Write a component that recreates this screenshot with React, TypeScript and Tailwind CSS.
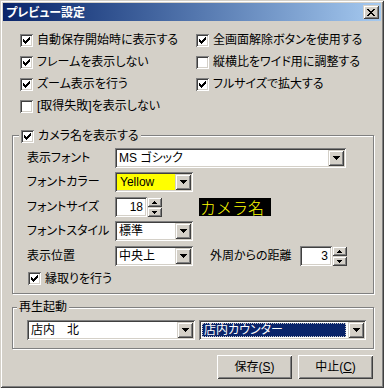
import React from "react";

const sunken =
  "shadow-[inset_1px_1px_0_#808080,inset_-1px_-1px_0_#ffffff,inset_2px_2px_0_#404040,inset_-2px_-2px_0_#d4d0c8]";
const raised =
  "shadow-[inset_1px_1px_0_#d4d0c8,inset_-1px_-1px_0_#404040,inset_2px_2px_0_#ffffff,inset_-2px_-2px_0_#808080]";
const button =
  "shadow-[inset_1px_1px_0_#ffffff,inset_-1px_-1px_0_#404040,inset_2px_2px_0_#d4d0c8,inset_-2px_-2px_0_#808080]";
const etched = "border border-[#808080] shadow-[inset_1px_1px_0_#ffffff,1px_1px_0_#ffffff]";

const CheckMark = () => (
  <svg width="13" height="13" viewBox="0 0 13 13" shapeRendering="crispEdges" className="block">
    <rect x="3" y="5" width="1" height="3" fill="#000" />
    <rect x="4" y="6" width="1" height="3" fill="#000" />
    <rect x="5" y="7" width="1" height="3" fill="#000" />
    <rect x="6" y="6" width="1" height="3" fill="#000" />
    <rect x="7" y="5" width="1" height="3" fill="#000" />
    <rect x="8" y="4" width="1" height="3" fill="#000" />
    <rect x="9" y="3" width="1" height="3" fill="#000" />
  </svg>
);

const Checkbox = ({ checked, label }: { checked?: boolean; label: string }) => (
  <div className="flex items-center gap-[4px]">
    <div className={`w-[13px] h-[13px] shrink-0 bg-white ${sunken}`}>{checked && <CheckMark />}</div>
    <span className="leading-[14px] whitespace-nowrap">{label}</span>
  </div>
);

const DownArrow = () => (
  <svg width="7" height="4" viewBox="0 0 7 4" shapeRendering="crispEdges" className="block">
    <rect x="0" y="0" width="7" height="1" fill="#000" />
    <rect x="1" y="1" width="5" height="1" fill="#000" />
    <rect x="2" y="2" width="3" height="1" fill="#000" />
    <rect x="3" y="3" width="1" height="1" fill="#000" />
  </svg>
);

const DropButton = () => (
  <div className={`w-[16px] h-[16px] shrink-0 bg-[#d4d0c8] flex items-center justify-center ${raised}`}>
    <DownArrow />
  </div>
);

const Spinner = ({ value }: { value: string }) => (
  <div className="flex h-[20px] shrink-0">
    <div className={`w-[32px] h-[20px] bg-white flex items-center justify-end pr-[4px] ${sunken}`}>{value}</div>
    <div className="w-[15px] flex flex-col">
      <div className={`h-[10px] bg-[#d4d0c8] flex items-center justify-center ${raised}`}>
        <svg width="5" height="3" viewBox="0 0 5 3" shapeRendering="crispEdges" className="block">
          <rect x="2" y="0" width="1" height="1" fill="#000" />
          <rect x="1" y="1" width="3" height="1" fill="#000" />
          <rect x="0" y="2" width="5" height="1" fill="#000" />
        </svg>
      </div>
      <div className={`h-[10px] bg-[#d4d0c8] flex items-center justify-center ${raised}`}>
        <svg width="5" height="3" viewBox="0 0 5 3" shapeRendering="crispEdges" className="block">
          <rect x="0" y="0" width="5" height="1" fill="#000" />
          <rect x="1" y="1" width="3" height="1" fill="#000" />
          <rect x="2" y="2" width="1" height="1" fill="#000" />
        </svg>
      </div>
    </div>
  </div>
);

const Label = ({ children }: { children: React.ReactNode }) => (
  <span className="w-[88px] shrink-0 whitespace-nowrap leading-[14px]">{children}</span>
);

export default function App() {
  return (
    <div className="w-[384px] h-[388px] bg-[#d4d0c8] p-[3px] text-[12px] text-black [font-feature-settings:'palt'] font-['Liberation_Sans','Noto_Sans_CJK_JP',sans-serif] shadow-[inset_1px_1px_0_#d4d0c8,inset_-1px_-1px_0_#404040,inset_2px_2px_0_#ffffff,inset_-2px_-2px_0_#808080]">
      {/* title bar */}
      <div className="h-[18px] flex items-center justify-between pl-[3px] pr-[2px] bg-linear-to-r from-[#0a246a] to-[#a6caf0]">
        <span className="text-white font-bold leading-[14px] font-['Noto_Sans_CJK_JP',sans-serif]">プレビュー設定</span>
        <div className={`w-[16px] h-[14px] bg-[#d4d0c8] flex items-center justify-center ${raised}`}>
          <svg width="8" height="7" viewBox="0 0 8 7" shapeRendering="crispEdges" className="block">
            <rect x="0" y="0" width="2" height="1" fill="#000" />
            <rect x="6" y="0" width="2" height="1" fill="#000" />
            <rect x="1" y="1" width="2" height="1" fill="#000" />
            <rect x="5" y="1" width="2" height="1" fill="#000" />
            <rect x="2" y="2" width="4" height="1" fill="#000" />
            <rect x="3" y="3" width="2" height="1" fill="#000" />
            <rect x="2" y="4" width="4" height="1" fill="#000" />
            <rect x="1" y="5" width="2" height="1" fill="#000" />
            <rect x="5" y="5" width="2" height="1" fill="#000" />
            <rect x="0" y="6" width="2" height="1" fill="#000" />
            <rect x="6" y="6" width="2" height="1" fill="#000" />
          </svg>
        </div>
      </div>

      <div className="pl-[9px]">
        {/* option checkboxes */}
        <div className="grid grid-cols-[176px_1fr] auto-rows-[22px] items-center pt-[8px]">
          <div className="pl-[8px]"><Checkbox checked label="自動保存開始時に表示する" /></div>
          <div className="pl-[8px]"><Checkbox checked label="全画面解除ボタンを使用する" /></div>
          <div className="pl-[8px]"><Checkbox checked label="フレームを表示しない" /></div>
          <div className="pl-[8px]"><Checkbox label="縦横比をワイド用に調整する" /></div>
          <div className="pl-[8px]"><Checkbox checked label="ズーム表示を行う" /></div>
          <div className="pl-[8px]"><Checkbox checked label="フルサイズで拡大する" /></div>
          <div className="pl-[8px]"><Checkbox label="[取得失敗]を表示しない" /></div>
          <div />
        </div>

        {/* camera name group */}
        <div className={`relative w-[362px] mt-[18px] pt-[12px] pb-[8px] pl-[14px] ${etched}`}>
          <div className="absolute top-[-7px] left-[6px] px-[2px] bg-[#d4d0c8]">
            <Checkbox checked label="カメラ名を表示する" />
          </div>

          <div className="flex items-center h-[20px]">
            <Label>表示フォント</Label>
            <div className={`w-[231px] h-[20px] bg-white flex items-center p-[2px] ${sunken}`}>
              <span className="flex-1 pl-[2px] leading-[14px]">MS ゴシック</span>
              <DropButton />
            </div>
          </div>

          <div className="flex items-center h-[20px] mt-[4px]">
            <Label>フォントカラー</Label>
            <div className={`w-[78px] h-[20px] bg-white flex items-center p-[2px] ${sunken}`}>
              <span className="flex-1 h-[16px] bg-[#ffff00] pl-[3px] leading-[16px]">Yellow</span>
              <DropButton />
            </div>
          </div>

          <div className="flex items-center h-[20px] mt-[5px]">
            <Label>フォントサイズ</Label>
            <Spinner value="18" />
            <div className="ml-[37px] w-[72px] h-[18px] flex items-center whitespace-nowrap bg-black text-[#ffff00] text-[16px] leading-[18px] pl-[1px] [font-feature-settings:normal] font-['Noto_Sans_CJK_JP',sans-serif] font-light">
              カメラ名
            </div>
          </div>

          <div className="flex items-center h-[20px] mt-[4px]">
            <Label>フォントスタイル</Label>
            <div className={`w-[78px] h-[20px] bg-white flex items-center p-[2px] ${sunken}`}>
              <span className="flex-1 pl-[2px] leading-[14px]">標準</span>
              <DropButton />
            </div>
          </div>

          <div className="flex items-center h-[20px] mt-[5px]">
            <Label>表示位置</Label>
            <div className={`w-[78px] h-[20px] bg-white flex items-center p-[2px] ${sunken}`}>
              <span className="flex-1 pl-[2px] leading-[14px]">中央上</span>
              <DropButton />
            </div>
            <span className="ml-[17px] w-[90px] whitespace-nowrap leading-[14px]">外周からの距離</span>
            <Spinner value="3" />
          </div>

          <div className="flex items-center h-[13px] mt-[6px] pl-[1px]">
            <Checkbox checked label="縁取りを行う" />
          </div>
        </div>

        {/* playback group */}
        <div className={`relative w-[362px] mt-[13px] pt-[12px] pb-[8px] pl-[14px] ${etched}`}>
          <div className="absolute top-[-8px] left-[4px] px-[2px] bg-[#d4d0c8] leading-[14px]">再生起動</div>
          <div className="flex gap-[4px]">
            <div className={`w-[168px] h-[20px] bg-white flex items-center p-[2px] ${sunken}`}>
              <span className="flex-1 pl-[2px] leading-[14px]">店内　北</span>
              <DropButton />
            </div>
            <div className={`w-[167px] h-[20px] bg-white flex items-center p-[2px] ${sunken}`}>
              <div className="flex-1 h-[16px] p-[1px] pr-[2px]">
                <div className="h-[14px] bg-[#0a246a] text-white border border-dotted border-[#c8c8c8] leading-[12px] pl-[1px]">
                  店内カウンター
                </div>
              </div>
              <DropButton />
            </div>
          </div>
        </div>
      </div>

      {/* buttons */}
      <div className="flex justify-end gap-[6px] pr-[8px] mt-[6px]">
        <button className={`w-[75px] h-[24px] bg-[#d4d0c8] flex items-center justify-center leading-[14px] ${button}`}>
          保存(<u>S</u>)
        </button>
        <button className={`w-[75px] h-[24px] bg-[#d4d0c8] flex items-center justify-center leading-[14px] ${button}`}>
          中止(<u>C</u>)
        </button>
      </div>
    </div>
  );
}
